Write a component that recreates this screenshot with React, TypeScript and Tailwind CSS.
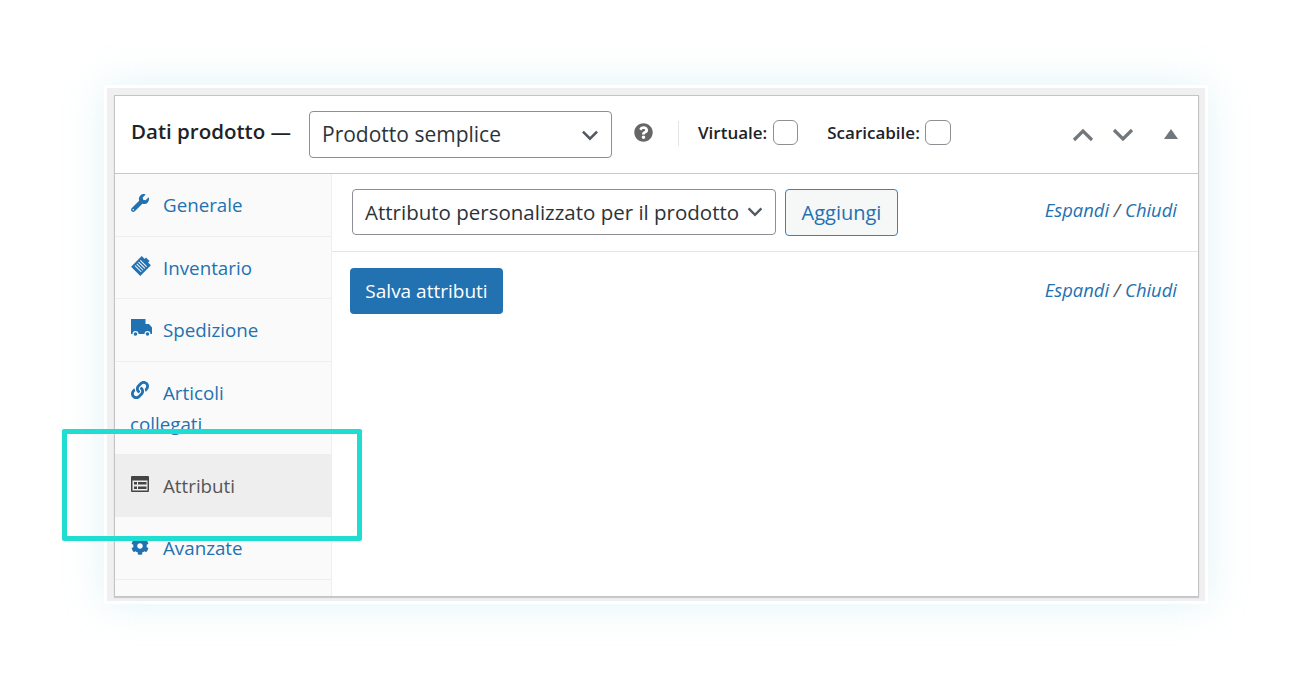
import React from "react";
import { FaWrench, FaLink, FaCog, FaQuestionCircle } from "react-icons/fa";

const font = "font-['Open_Sans','Noto_Sans',sans-serif]";

// clipboard tilted 45deg, as in the woocommerce inventory tab
const InventoryIcon = () => (
  <svg width="20" height="20" viewBox="0 0 20 20" className="text-[#2271b1]">
    <g transform="rotate(45 10 10)">
      <rect x="3.5" y="2.5" width="13" height="15" fill="currentColor" />
      <rect x="7.5" y="0.5" width="5" height="3" fill="currentColor" />
      <path d="M5.5 6.5h9M5.5 9h9M5.5 11.5h9M5.5 14h9" stroke="#f9f9f9" strokeWidth="1" />
    </g>
  </svg>
);

const TruckIcon = () => (
  <svg width="21" height="18" viewBox="0 0 21 18" className="text-[#2271b1]">
    <path d="M0 0h14.5v5h3.5l3 3.5V15H0z" fill="currentColor" />
    <circle cx="4.5" cy="15" r="2.4" fill="currentColor" stroke="#fafafa" strokeWidth="1.2" />
    <circle cx="16.5" cy="15" r="2.4" fill="currentColor" stroke="#fafafa" strokeWidth="1.2" />
  </svg>
);

const AttributesIcon = () => (
  <svg width="18" height="16" viewBox="0 0 18 16" className="text-[#444]">
    <rect x="0" y="0" width="18" height="16" rx="1" fill="currentColor" />
    <rect x="1.5" y="4.5" width="15" height="10" fill="#eee" />
    <rect x="3" y="6" width="3" height="2.5" fill="currentColor" />
    <rect x="3" y="10.5" width="3" height="2.5" fill="currentColor" />
    <rect x="7" y="6" width="8.5" height="2.5" fill="currentColor" />
    <rect x="7" y="10.5" width="8.5" height="2.5" fill="currentColor" />
  </svg>
);

const Chevron = ({ up, className }: { up?: boolean; className: string }) => (
  <svg width="22" height="14" viewBox="0 0 22 14" className={className}>
    <path d={up ? "M2 12l9-9 9 9" : "M2 2l9 9 9-9"} fill="none" stroke="currentColor" strokeWidth="3.2" />
  </svg>
);

const ExpandLinks = () => (
  <span className="text-[18.4px] italic text-[#2271b1]">
    Espandi <span className="text-[#555]">/</span> Chiudi
  </span>
);

const tabs = [
  { label: "Generale", icon: <FaWrench size={18} />, h: "h-[63px]" },
  { label: "Inventario", icon: <InventoryIcon />, h: "h-[62px]" },
  { label: "Spedizione", icon: <TruckIcon />, h: "h-[63px]" },
];

export default function App() {
  return (
    <div className={`relative h-[688px] w-[1300px] overflow-hidden bg-white pl-[104px] pt-[85px] ${font}`}>
      <div className="h-[519px] w-[1104px] bg-white p-[3px] shadow-[0_0_38px_rgba(150,215,225,0.28)]">
        <div className="h-full bg-[#f0f0f0] pb-[4px] pl-[7px] pr-[6px] pt-[7px]">
          <div className="flex h-full flex-col border border-[#c3c4c7] bg-white shadow-[0_1px_1px_rgba(0,0,0,0.15)]">
            {/* header */}
            <div className="flex h-[78px] shrink-0 items-center border-b border-[#c8c8c8] pl-[16px] pr-[20px]">
              <span className="mb-[6px] w-[178px] text-[20.5px] font-semibold whitespace-nowrap text-[#1d2327]">
                Dati prodotto —
              </span>
              <div className="flex h-[47px] w-[303px] items-center justify-between rounded-[4px] border border-[#8c8f94] pl-[12px] pr-[12px]">
                <span className="text-[21px] font-medium text-[#2c3338]">Prodotto semplice</span>
                <Chevron className="mt-[1px] h-[11px] w-[18px] text-[#50575e]" />
              </div>
              <FaQuestionCircle size={19} className="mb-[4px] ml-[22px] text-[#666]" />
              <div className="mb-[2px] ml-[25px] h-[25px] w-px bg-[#e5e5e5]" />
              <span className="mb-[3px] ml-[19px] text-[17px] font-semibold text-[#1d2327]">Virtuale:</span>
              <div className="mb-[4px] ml-[6px] h-[25px] w-[25px] rounded-[6px] border border-[#8c8f94]" />
              <span className="mb-[3px] ml-[29px] text-[17px] font-semibold text-[#1d2327]">Scaricabile:</span>
              <div className="mb-[4px] ml-[5px] h-[25px] w-[26px] rounded-[6px] border border-[#8c8f94]" />
              <div className="ml-auto flex items-center">
                <Chevron up className="text-[#72777c]" />
                <Chevron className="ml-[18px] text-[#72777c]" />
                <div className="mb-[1px] ml-[30px] h-0 w-0 border-x-[7px] border-b-[10px] border-x-transparent border-b-[#72777c]" />
              </div>
            </div>

            <div className="flex min-h-0 flex-1">
              {/* tabs */}
              <div className="w-[217px] shrink-0 border-r border-[#eee] bg-[#fafafa] text-[18.75px] text-[#2271b1]">
                {tabs.map((t) => (
                  <div key={t.label} className={`flex items-center border-b border-[#eee] pl-[16px] pt-[1px] ${t.h}`}>
                    <span className="mb-[5px] flex w-[32px] items-center">{t.icon}</span>
                    <span>{t.label}</span>
                  </div>
                ))}
                <div className="h-[92px] overflow-hidden pl-[15px] pt-[15px] leading-[31px]">
                  <FaLink size={18} className="relative bottom-[5px] left-[1px] mr-[15px] inline-block" />
                  Articoli
                  <br />
                  collegati
                </div>
                <div className="flex h-[63px] items-center bg-[#eee] pl-[16px] pt-[1px] text-[#555]">
                  <span className="mb-[5px] flex w-[32px] items-center">
                    <AttributesIcon />
                  </span>
                  <span>Attributi</span>
                </div>
                <div className="flex h-[63px] items-center border-b border-[#eee] pl-[16px] pt-[1px]">
                  <span className="mb-[5px] flex w-[32px] items-center">
                    <FaCog size={18} />
                  </span>
                  <span>Avanzate</span>
                </div>
              </div>

              {/* attributes panel */}
              <div className="min-w-0 flex-1">
                <div className="flex h-[78px] items-center border-b border-[#e5e5e5] pl-[20px] pr-[21px]">
                  <div className="mb-[1px] flex h-[46px] w-[424px] items-center justify-between rounded-[4px] border border-[#8c8f94] pl-[12px] pr-[11px]">
                    <span className="text-[20.5px] whitespace-nowrap text-[#2c3338]">Attributo personalizzato per il prodotto</span>
                    <Chevron className="h-[10px] w-[18px] text-[#50575e]" />
                  </div>
                  <div className="ml-[9px] flex h-[47px] w-[113px] items-center justify-center rounded-[4px] border border-[#3582c4] bg-[#f6f7f7] text-[20px] text-[#2271b1]">
                    Aggiungi
                  </div>
                  <div className="mb-[5px] ml-auto">
                    <ExpandLinks />
                  </div>
                </div>
                <div className="flex items-start justify-between pl-[18px] pr-[21px] pt-[16px]">
                  <div className="flex h-[46px] w-[153px] items-center justify-center rounded-[4px] bg-[#2271b1] text-[19px] text-white">
                    Salva attributi
                  </div>
                  <div className="pt-[8px]">
                    <ExpandLinks />
                  </div>
                </div>
              </div>
            </div>
          </div>
        </div>
      </div>

      {/* highlight round the Attributi tab */}
      <div className="absolute left-[62px] top-[429px] h-[112px] w-[300px] rounded-[2px] border-[5px] border-[#1fddd0]" />
    </div>
  );
}
